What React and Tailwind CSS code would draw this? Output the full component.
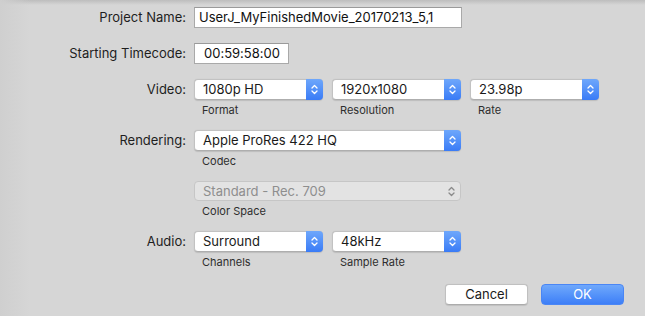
import React from "react";

function Chevrons({ color = "#ffffff" }) {
  return (
    <svg width="7" height="11" viewBox="0 0 7 11" fill="none">
      <path d="M1 4 L3.5 1.5 L6 4" stroke={color} strokeWidth="1.3" strokeLinecap="round" strokeLinejoin="round" />
      <path d="M1 7 L3.5 9.5 L6 7" stroke={color} strokeWidth="1.3" strokeLinecap="round" strokeLinejoin="round" />
    </svg>
  );
}

function Popup({ value, width, disabled }) {
  if (disabled) {
    return (
      <div
        className="flex h-[20px] items-center justify-between rounded-[4px] border border-[#c6c6c6] bg-[#e3e3e3] pl-[8px] pr-[5px] text-[#8e8e8e]"
        style={{ width }}
      >
        <span className="leading-none">{value}</span>
        <Chevrons color="#8a8a8a" />
      </div>
    );
  }
  return (
    <div
      className="flex h-[21px] items-stretch rounded-[4px] border border-[#c2c2c2] border-b-[#aeaeae] bg-white shadow-[0_0.5px_1px_rgba(0,0,0,0.12)]"
      style={{ width }}
    >
      <div className="flex flex-1 items-center pl-[8px] leading-none text-[#1a1a1a]">{value}</div>
      <div className="-my-px -mr-px flex w-[17px] items-center justify-center rounded-r-[4px] bg-gradient-to-b from-[#6ea7fb] to-[#3a7bf6]">
        <Chevrons />
      </div>
    </div>
  );
}

function SubLabel({ children }) {
  return <div className="mt-[3px] h-[14px] pl-[8px] text-[11px] leading-[14px] text-[#2e2e2e]">{children}</div>;
}

function Row({ label, children, className = "" }) {
  return (
    <div className={"flex " + className}>
      <div className="flex h-[21px] w-[186px] shrink-0 items-center justify-end text-[#1e1e1e]">{label}</div>
      <div className="ml-[8px]">{children}</div>
    </div>
  );
}

export default function App() {
  return (
    <div
      className="relative h-[316px] w-[645px] overflow-hidden bg-[#d6d6d6] text-[13px] [font-feature-settings:'calt'_0]"
      style={{ fontFamily: "Inter, 'Noto Sans', 'Liberation Sans', sans-serif" }}
    >
      <div className="pointer-events-none absolute inset-x-0 top-0 h-[5px] bg-gradient-to-b from-[#bdbdbd] to-[#d6d6d6]" />
      <div className="pointer-events-none absolute inset-y-0 left-0 w-[30px] bg-gradient-to-r from-[#cfcfcf] to-transparent" />

      <div className="relative pt-[7px]">
        <Row label="Project Name:">
          <div className="flex h-[21px] w-[268px] items-center border border-[#a9a9a9] border-t-[#9a9a9a] bg-white pl-[4px] leading-none text-[#111]">
            UserJ_MyFinishedMovie_20170213_5,1
          </div>
        </Row>

        <Row label="Starting Timecode:" className="mt-[15px]">
          <div className="flex h-[21px] w-[95px] items-center border border-[#a9a9a9] border-t-[#9a9a9a] bg-white pl-[9px] leading-none text-[#111]">
            00:59:58:00
          </div>
        </Row>

        <Row label="Video:" className="mt-[15px]">
          <div className="flex gap-[9px]">
            <div>
              <Popup value="1080p HD" width={129} />
              <SubLabel>Format</SubLabel>
            </div>
            <div>
              <Popup value="1920x1080" width={129} />
              <SubLabel>Resolution</SubLabel>
            </div>
            <div>
              <Popup value="23.98p" width={129} />
              <SubLabel>Rate</SubLabel>
            </div>
          </div>
        </Row>

        <Row label="Rendering:" className="mt-[13px]">
          <Popup value="Apple ProRes 422 HQ" width={267} />
          <SubLabel>Codec</SubLabel>
        </Row>

        <div className="mt-[13px] ml-[194px]">
          <Popup value="Standard - Rec. 709" width={267} disabled />
          <SubLabel>Color Space</SubLabel>
        </div>

        <Row label="Audio:" className="mt-[13px]">
          <div className="flex gap-[9px]">
            <div>
              <Popup value="Surround" width={129} />
              <SubLabel>Channels</SubLabel>
            </div>
            <div>
              <Popup value="48kHz" width={129} />
              <SubLabel>Sample Rate</SubLabel>
            </div>
          </div>
        </Row>

        <div className="mt-[15px] flex justify-end gap-[13px] pr-[21px]">
          <div className="flex h-[21px] w-[83px] items-center justify-center rounded-[4px] border border-[#c0c0c0] border-b-[#acacac] bg-white leading-none text-[#1a1a1a] shadow-[0_0.5px_1px_rgba(0,0,0,0.1)]">
            Cancel
          </div>
          <div className="flex h-[21px] w-[83px] items-center justify-center rounded-[4px] border border-[#4a86f5] bg-gradient-to-b from-[#6fa8fb] to-[#3d7ef7] leading-none text-white">
            OK
          </div>
        </div>
      </div>
    </div>
  );
}
